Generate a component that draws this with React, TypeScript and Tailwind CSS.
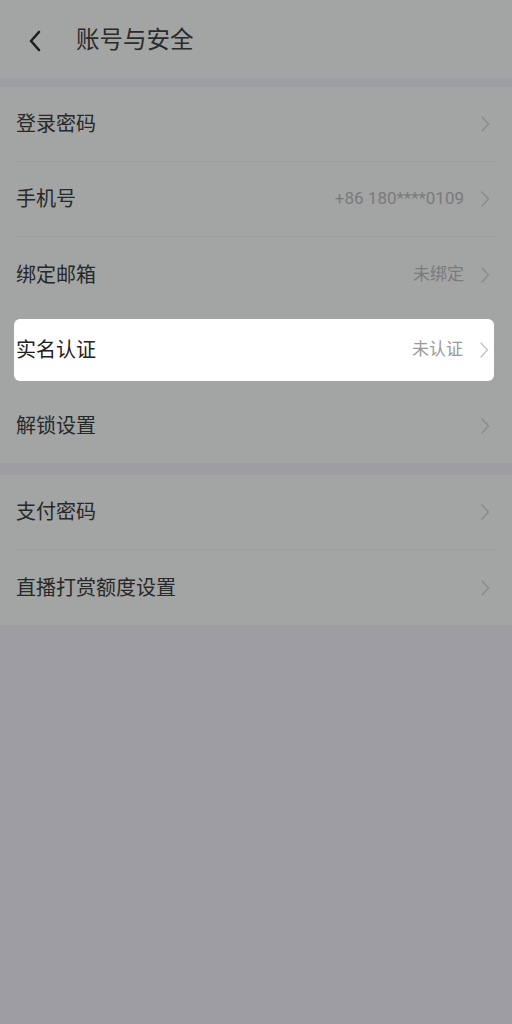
import React from 'react';

type Row = { label: string; value?: string; focus?: boolean };

const GROUPS: Row[][] = [
  [
    { label: '登录密码' },
    { label: '手机号', value: '+86 180****0109' },
    { label: '绑定邮箱', value: '未绑定' },
    { label: '实名认证', value: '未认证', focus: true },
    { label: '解锁设置' },
  ],
  [{ label: '支付密码' }, { label: '直播打赏额度设置' }],
];

const Chevron: React.FC<{ light?: boolean }> = ({ light }) => (
  <svg width="10" height="18" viewBox="0 0 10 18" fill="none" className="shrink-0">
    <path
      d="M2 2l6.5 7L2 16"
      stroke={light ? '#c4c4c6' : '#8a8b8b'}
      strokeWidth="1.4"
      strokeLinecap="round"
      strokeLinejoin="round"
    />
  </svg>
);

const SettingRow: React.FC<{ row: Row; last: boolean }> = ({ row, last }) => {
  if (row.focus) {
    return (
      <div className="h-[76px] pl-[14px] pr-[18px] py-[7px]">
        <div className="flex h-full items-center rounded-[6px] bg-white pl-[2px] pr-[5px]">
          <span className="flex-1 text-[20px] text-[#222]">{row.label}</span>
          <span className="mr-[16px] text-[17px] text-[#9a9a9c]">{row.value}</span>
          <Chevron light />
        </div>
      </div>
    );
  }
  return (
    <div className="px-4">
      <div className={`flex h-[75px] items-center pr-[6px] ${last ? '' : 'border-b border-[#9d9e9e]'}`}>
        <span className="flex-1 text-[20px] text-[#272828]">{row.label}</span>
        {row.value && <span className="mr-[16px] text-[17px] text-[#7a7b7b]">{row.value}</span>}
        <Chevron />
      </div>
    </div>
  );
};

const App: React.FC = () => {
  return (
    <div
      className="min-h-[1024px] w-full bg-[#9e9ea2]"
      style={{ fontFamily: 'Roboto, "Noto Sans CJK SC", sans-serif' }}
    >
      {/* header */}
      <div className="flex h-[78px] items-center bg-[#a3a4a4] pl-[26px] pt-[3px]">
        <svg width="18" height="24" viewBox="0 0 18 24" fill="none">
          <path d="M13 3L5 12l8 9" stroke="#1f1f1f" strokeWidth="2.6" strokeLinecap="round" strokeLinejoin="round" />
        </svg>
        <h1 className="ml-[32px] text-[23.5px] font-normal text-[#2a2b2b]">账号与安全</h1>
      </div>

      {GROUPS.map((group, gi) => (
        <div key={gi} className={`${gi === 0 ? 'mt-[9px]' : 'mt-[12px]'} bg-[#a3a4a4]`}>
          {group.map((row, ri) => (
            <SettingRow
              key={row.label}
              row={row}
              last={ri === group.length - 1 || !!group[ri + 1]?.focus}
            />
          ))}
        </div>
      ))}
    </div>
  );
};

export default App;
